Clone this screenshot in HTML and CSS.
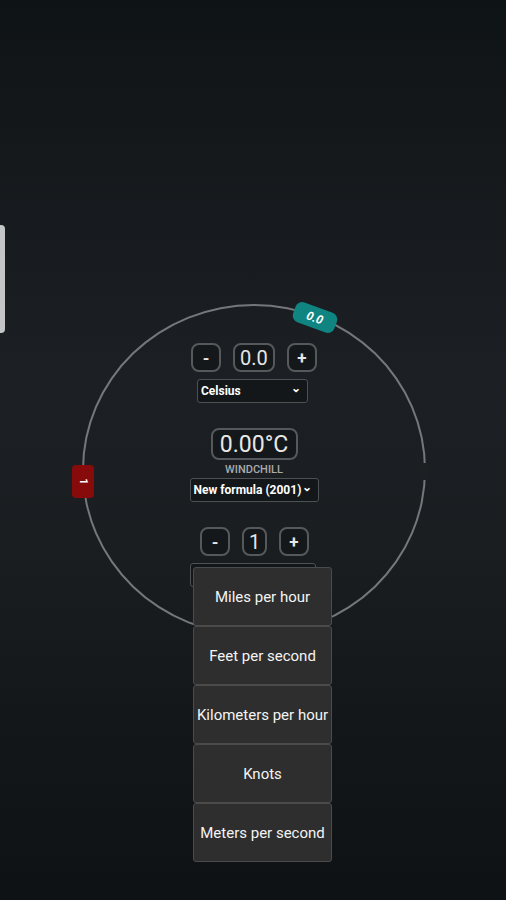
FILE: index.html
```html
<!DOCTYPE html>
<html lang="en">
<head>
    <meta charset="UTF-8">
    <meta name="viewport" content="width=device-width, initial-scale=1.0">
    <title>Windchill</title>
    <link rel="stylesheet" href="styles.css">
</head>
<body>
    <div class="side-tab"></div>

    <div class="dial">
        <div class="badge badge-temp"><span>0.0</span></div>
        <div class="badge badge-wind"><span>1</span></div>
        <div class="dial-gap"></div>

        <div class="stepper">
            <button class="step-btn">-</button>
            <div class="step-value">0.0</div>
            <button class="step-btn">+</button>
        </div>
        <div class="select select-unit">Celsius <span class="chev">&#8964;</span></div>

        <div class="result">0.00°C</div>
        <div class="result-label">WINDCHILL</div>
        <div class="select select-formula">New formula (2001) <span class="chev">&#8964;</span></div>

        <div class="stepper stepper-wind">
            <button class="step-btn">-</button>
            <div class="step-value step-small">1</div>
            <button class="step-btn">+</button>
        </div>
        <div class="select select-speed"></div>
    </div>

    <ul class="menu">
        <li>Miles per hour</li>
        <li>Feet per second</li>
        <li>Kilometers per hour</li>
        <li>Knots</li>
        <li>Meters per second</li>
    </ul>
</body>
</html>
```

FILE: styles.css
```css
body {
    margin: 0;
    height: 900px;
    overflow: hidden;
    font-family: Roboto, "Liberation Sans", sans-serif;
    color: #eeeeee;
    background: linear-gradient(to bottom, #0e1315 0%, #15191c 18%, #1c2024 42%, #1a1e21 60%, #131719 80%, #0e1214 100%);
}
.side-tab {
    position: absolute;
    left: 0;
    top: 225px;
    width: 5px;
    height: 108px;
    background-color: #c4c5c6;
    border-radius: 0 4px 4px 0;
}
.dial {
    position: relative;
    box-sizing: border-box;
    width: 344px;
    height: 332px;
    margin: 304px 0 0 82px;
    padding-top: 37px;
    border: 2px solid #74787b;
    border-radius: 50%;
    display: flex;
    flex-direction: column;
    align-items: center;
}
.dial-gap {
    position: absolute;
    right: -4px;
    top: 157px;
    width: 8px;
    height: 17px;
    background-color: #1c2023;
}
.badge {
    position: absolute;
    display: flex;
    align-items: center;
    justify-content: center;
    color: #ffffff;
    font-weight: bold;
    font-size: 12px;
}
.badge-temp {
    left: 209px;
    top: 1px;
    width: 44px;
    height: 21px;
    background-color: #0f8480;
    border-radius: 7px;
    transform: rotate(20deg);
    font-style: italic;
}
.badge-wind {
    left: -12px;
    top: 159px;
    width: 22px;
    height: 33px;
    background-color: #870b0b;
    border-radius: 4px;
}
.badge-wind span {
    transform: rotate(90deg);
    font-size: 11px;
}
.stepper {
    display: flex;
    gap: 12px;
    height: 29px;
}
.stepper-wind {
    margin-top: 25px;
    margin-left: 1px;
}
.step-btn, .step-value {
    box-sizing: border-box;
    height: 29px;
    border: 2px solid #55595c;
    border-radius: 8px;
    background-color: #15181a;
    color: #e6e6e6;
    font-family: inherit;
    display: flex;
    align-items: center;
    justify-content: center;
}
.step-btn {
    width: 30px;
    padding: 0;
    font-size: 17px;
    font-weight: bold;
}
.step-value {
    width: 42px;
    font-size: 20px;
}
.step-small {
    width: 25px;
}
.select {
    box-sizing: border-box;
    height: 24px;
    margin-top: 7px;
    padding: 0 6px 0 3px;
    border: 1px solid #4d5154;
    border-radius: 3px;
    background-color: #141719;
    color: #ffffff;
    font-size: 12px;
    font-weight: bold;
    display: flex;
    align-items: center;
    justify-content: space-between;
}
.chev {
    font-size: 12px;
    line-height: 1;
    margin-top: -6px;
}
.select-unit {
    width: 111px;
    margin-left: -3px;
}
.select-formula {
    width: 129px;
    margin-top: 0;
}
.select-speed {
    width: 126px;
    margin-left: -2px;
}
.result {
    box-sizing: border-box;
    margin-top: 25px;
    width: 87px;
    height: 32px;
    border: 2px solid #55595c;
    border-radius: 8px;
    background-color: #15181a;
    color: #e8e8e8;
    font-size: 23px;
    display: flex;
    align-items: center;
    justify-content: center;
}
.result-label {
    height: 14px;
    margin-top: 4px;
    font-size: 11px;
    font-weight: 500;
    line-height: 12px;
    color: #a9abad;
}
.menu {
    position: absolute;
    left: 193px;
    top: 567px;
    width: 139px;
    margin: 0;
    padding: 0;
    list-style: none;
}
.menu li {
    box-sizing: border-box;
    height: 59px;
    border: 1px solid #4b4b4b;
    border-radius: 3px;
    background-color: #2e2e2e;
    color: #f4f4f4;
    font-size: 15px;
    display: flex;
    align-items: center;
    justify-content: center;
    white-space: nowrap;
}
```
